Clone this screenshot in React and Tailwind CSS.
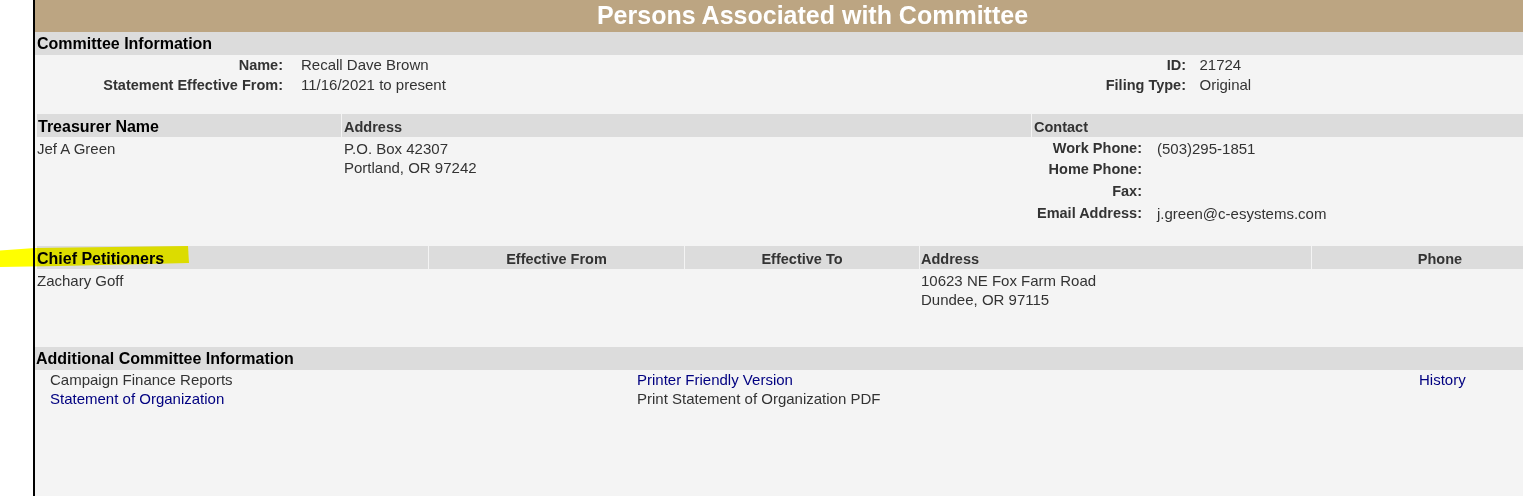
const head = 'h-[23px] bg-[#dcdcdc]'
const headA = `${head} pt-px leading-[22px]`
const headB = `${head} pt-[3px] leading-[20px]`
const sub = 'text-[14.5px] font-bold text-[#333]'
const label = 'text-right text-[14.5px] font-bold text-[#333]'
const link = 'text-[#000080]'

export default function App() {
  return (
    <div className="relative flex h-[496px] w-full overflow-hidden bg-white font-['Liberation_Sans',Arial,sans-serif] text-[15px] text-[#333]">
      <div className="w-[33px] shrink-0" />

      <div className="flex w-[1557px] shrink-0 flex-col border-l-2 border-black bg-[#f4f4f4]">
        {/* title */}
        <div className="flex h-[32px] items-center justify-center bg-[#bca582] text-[25px] font-bold text-white">
          Persons Associated with Committee
        </div>

        {/* committee information */}
        <div className={`${headA} pl-[2px] text-[16px] font-bold text-black`}>Committee Information</div>
        <div className="grid grid-cols-[248px_600px_303px_1fr] pb-[19px] leading-[20px]">
          <div className={label}>Name:</div>
          <div className="pl-[18px]">Recall Dave Brown</div>
          <div className={label}>ID:</div>
          <div className="pl-[13.5px]">21724</div>
          <div className={label}>Statement Effective From:</div>
          <div className="pl-[18px]">11/16/2021 to present</div>
          <div className={label}>Filing Type:</div>
          <div className="pl-[13.5px]">Original</div>
        </div>

        {/* treasurer */}
        <div className="grid grid-cols-[304px_689px_1fr] gap-x-px pl-[2px]">
          <div className={`${headB} pl-px text-[16px] font-bold text-black`}>Treasurer Name</div>
          <div className={`${headB} pl-[2px] ${sub}`}>Address</div>
          <div className={`${headB} pl-[2px] ${sub}`}>Contact</div>
        </div>
        <div className="grid grid-cols-[304px_689px_1fr] gap-x-px pb-[22px] pl-[2px]">
          <div className="pt-[1.5px] leading-[19px]">Jef A Green</div>
          <div className="pl-[2px] pt-[1.5px] leading-[19px]">
            <div>P.O. Box 42307</div>
            <div>Portland, OR 97242</div>
          </div>
          <div className="grid grid-cols-[110px_1fr] pt-[0.5px] leading-[21.7px]">
            <div className={label}>Work Phone:</div>
            <div className="pl-[15px]">(503)295-1851</div>
            <div className={label}>Home Phone:</div>
            <div />
            <div className={label}>Fax:</div>
            <div />
            <div className={label}>Email Address:</div>
            <div className="pl-[15px]">j.green@c-esystems.com</div>
          </div>
        </div>

        {/* chief petitioners */}
        <div className="grid grid-cols-[391px_255px_234px_391px_256px] gap-x-px pl-[2px]">
          <div className={`${headB} text-[16px] font-bold text-black`}>Chief Petitioners</div>
          <div className={`${headB} text-center ${sub}`}>Effective From</div>
          <div className={`${headB} text-center ${sub}`}>Effective To</div>
          <div className={`${headB} pl-px ${sub}`}>Address</div>
          <div className={`${headB} text-center ${sub}`}>Phone</div>
        </div>
        <div className="grid h-[78px] grid-cols-[391px_255px_234px_391px_256px] gap-x-px pl-[2px] pt-[1.5px] leading-[19px]">
          <div>Zachary Goff</div>
          <div />
          <div />
          <div className="pl-px">
            <div>10623 NE Fox Farm Road</div>
            <div>Dundee, OR 97115</div>
          </div>
          <div />
        </div>

        {/* additional */}
        <div className={`${headA} pl-px text-[16px] font-bold text-black`}>Additional Committee Information</div>
        <div className="grid grid-cols-[602px_782px_1fr] leading-[19px]">
          <div className="pl-[15px]">Campaign Finance Reports</div>
          <div className={link}>Printer Friendly Version</div>
          <div className={link}>History</div>
          <div className={`pl-[15px] ${link}`}>Statement of Organization</div>
          <div>Print Statement of Organization PDF</div>
          <div />
        </div>
      </div>

      {/* marker highlight */}
      <svg className="pointer-events-none absolute left-0 top-[245px] mix-blend-multiply" width="190" height="24" viewBox="0 0 190 24">
        <polygon points="0,5.5 35,3 188,1 189,18 60,21 0,22" fill="#ffff00" />
      </svg>
    </div>
  )
}
